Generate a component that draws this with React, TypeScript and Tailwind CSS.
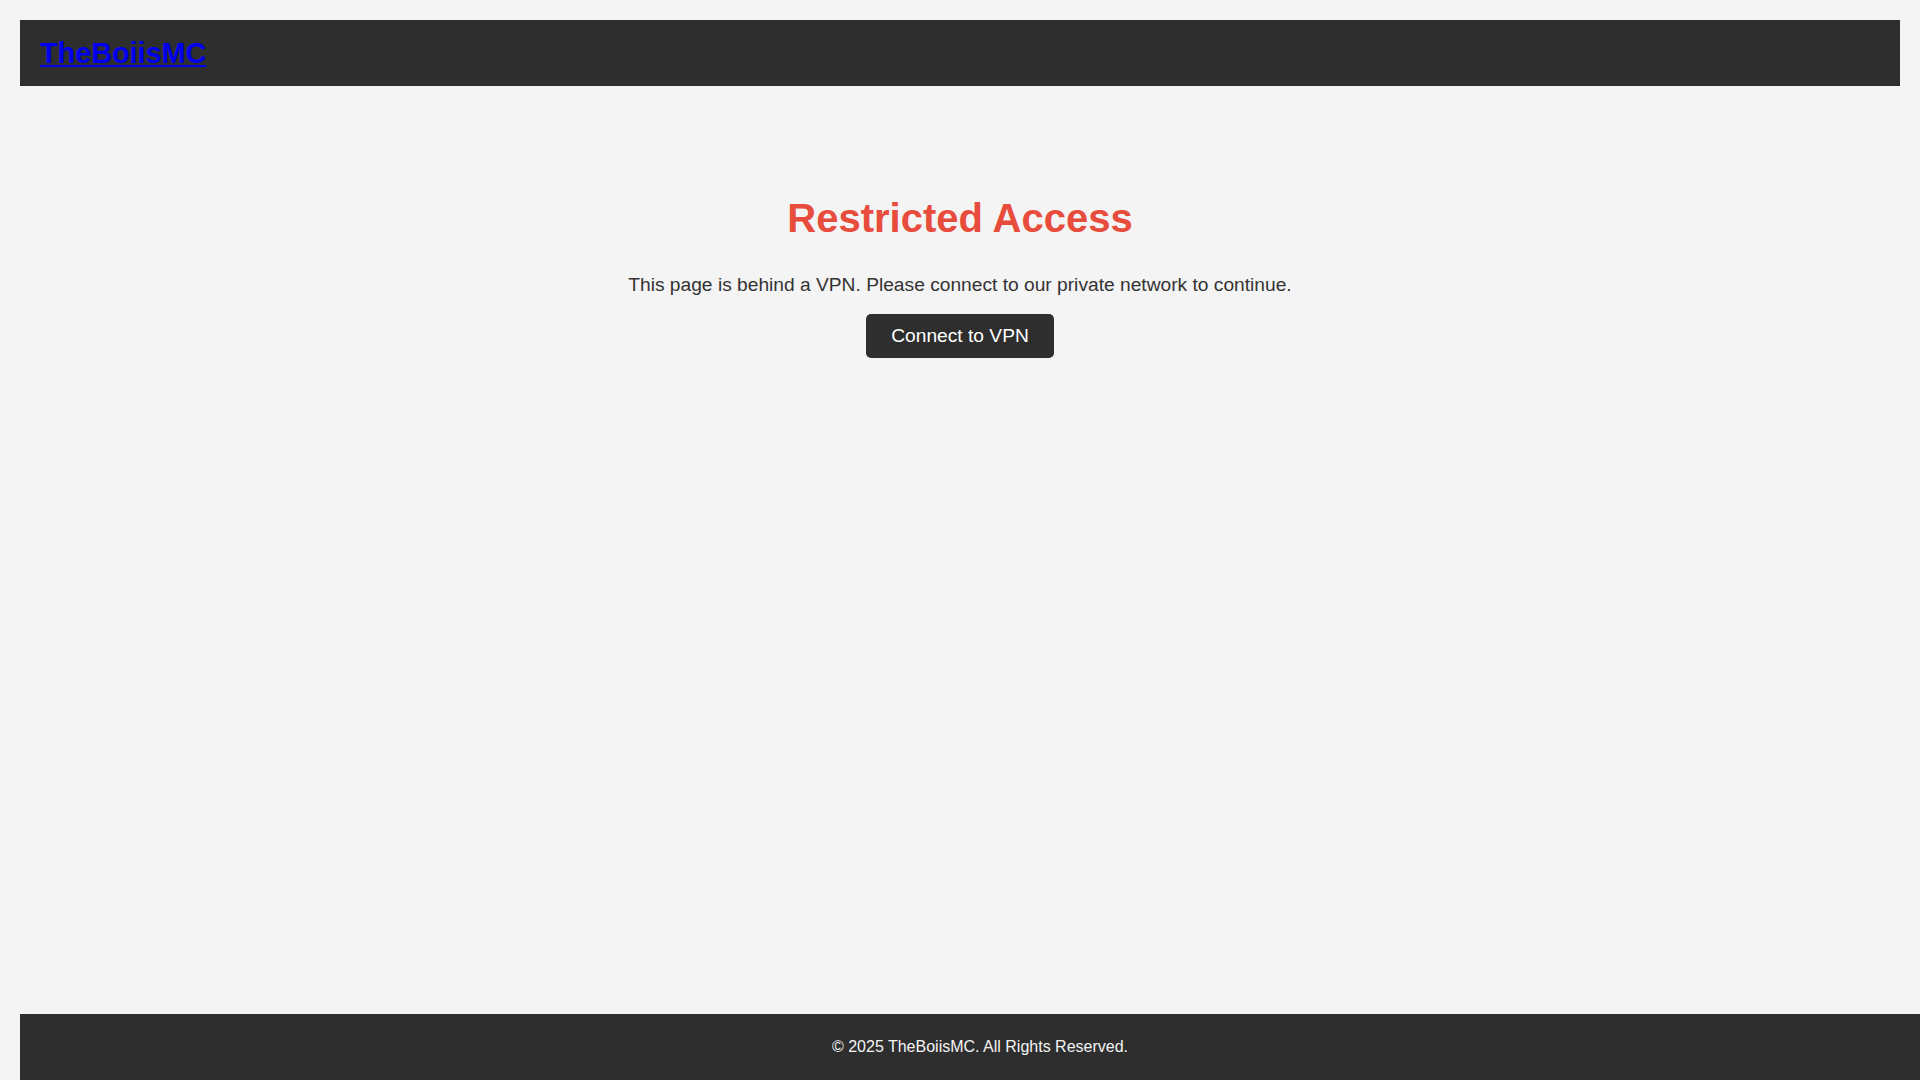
export default function App() {
  return (
    <div
      className="min-h-screen flex flex-col overflow-hidden bg-[#f4f4f4] pt-5 px-5 text-[#333]"
      style={{ fontFamily: '"Liberation Sans", Arial, sans-serif' }}
    >
      {/* Header */}
      <header className="h-[66px] flex items-center px-5 bg-[#2e2e2e] shrink-0">
        <a href="#" className="text-[28.8px] font-bold leading-none text-[#0000ee] underline">
          TheBoiisMC
        </a>
      </header>

      {/* Main */}
      <main className="flex-1 flex flex-col items-center text-center">
        <h1 className="mt-[109px] text-[40px] leading-[46px] font-bold text-[#e74c3c]">
          Restricted Access
        </h1>
        <p className="mt-[33px] text-[19.2px] leading-[22px] text-[#333]">
          This page is behind a VPN. Please connect to our private network to continue.
        </p>
        <button
          type="button"
          className="mt-[18px] h-[44px] px-[25px] rounded-[5px] bg-[#2e2e2e] text-white text-[19.2px] leading-none"
        >
          Connect to VPN
        </button>
      </main>

      {/* Footer */}
      <footer className="h-[66px] w-screen shrink-0 flex items-center justify-center bg-[#2e2e2e] text-[16px] text-[#f4f4f4]">
        © 2025 TheBoiisMC. All Rights Reserved.
      </footer>
    </div>
  );
}
